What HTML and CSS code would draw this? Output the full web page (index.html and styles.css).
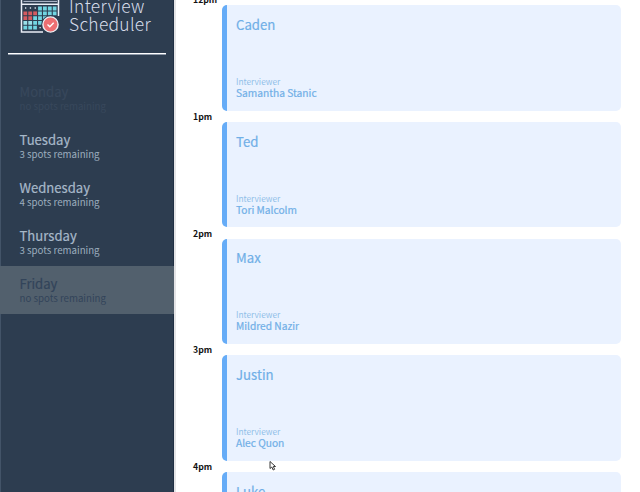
FILE: index.html
```
<!DOCTYPE html>
<html lang="en">
<head>
<meta charset="utf-8">
<title>Interview Scheduler</title>
<link rel="stylesheet" href="styles.css">
</head>
<body>
<main class="layout">
  <aside class="sidebar">
    <header class="brand">
      <svg class="logo" width="40" height="34" viewBox="0 0 40 34">
        <g fill="none" stroke="#e9edf5" stroke-width="1.5">
          <path d="M1.500 0V32H23M38.500 0V16"/>
          <path d="M2 4.300H39" stroke-width="1.400"/>
          <path d="M3.500 1.400H37" stroke-width="1" stroke="#b9c2d4"/>
        </g>
        <g fill="none" stroke-width="3.800" stroke-dasharray="3.800 1.100">
          <path d="M18.100 8.500H36.500M18.100 13.300H36.500M13.200 18.100H30M13.200 22.900H22M3.400 27.700H16.900" stroke="#72d5e2"/>
          <path d="M3.400 22.900H12.100" stroke="#9adfe9"/>
          <path d="M3.400 13.300H12.100M3.400 18.100H12.100" stroke="#d45b60"/>
          <path d="M13.200 13.300H17" stroke="#d45b60"/>
        </g>
        <path d="M5 8H16M19.500 27.700H21" stroke="#dce5ee" stroke-width="1.300" stroke-dasharray="1.300 3.500"/>
        <circle cx="30.500" cy="24.500" r="9.200" fill="#2d3d50"/>
        <circle cx="30.500" cy="24.500" r="7.600" fill="#ed6f72" stroke="#f0eff4" stroke-width="1.400"/>
        <path d="M27.500 24.600L29.800 26.700L33.700 22.700" fill="none" stroke="#fff" stroke-width="1.400"/>
      </svg>
      <h1 class="title">Interview<br>Scheduler</h1>
    </header>
    <hr class="rule">
    <ul class="days">
      <li class="day day-past"><h2>Monday</h2><p>no spots remaining</p></li>
      <li class="day"><h2>Tuesday</h2><p>3 spots remaining</p></li>
      <li class="day"><h2>Wednesday</h2><p>4 spots remaining</p></li>
      <li class="day"><h2>Thursday</h2><p>3 spots remaining</p></li>
      <li class="day day-selected"><h2>Friday</h2><p>no spots remaining</p></li>
    </ul>
  </aside>
  <section class="schedule">
    <article class="slot"><h4>12pm</h4><div class="card"><h2>Caden</h2><div><h5>Interviewer</h5><h3>Samantha Stanic</h3></div></div></article>
    <article class="slot"><h4>1pm</h4><div class="card"><h2>Ted</h2><div><h5>Interviewer</h5><h3>Tori Malcolm</h3></div></div></article>
    <article class="slot"><h4>2pm</h4><div class="card"><h2>Max</h2><div><h5>Interviewer</h5><h3>Mildred Nazir</h3></div></div></article>
    <article class="slot"><h4>3pm</h4><div class="card"><h2>Justin</h2><div><h5>Interviewer</h5><h3>Alec Quon</h3></div></div></article>
    <article class="slot"><h4>4pm</h4><div class="card"><h2>Luke</h2></div></article>
  </section>
</main>
<svg class="cursor" width="8" height="10" viewBox="0 0 8 10"><path d="M1 .5V7.500L2.800 6L4.200 9L5.600 8.300L4.300 5.500H6.500Z" fill="#fff" stroke="#222" stroke-width=".9"/></svg>
</body>
</html>
```
FILE: styles.css
```
* { box-sizing: border-box; margin: 0; padding: 0; }

body {
  height: 492px;
  overflow: hidden;
  background: #fff;
  font-family: "Noto Sans CJK SC", "Noto Sans", sans-serif;
}

h1, h2, h3, h4, h5 { font-weight: 400; white-space: nowrap; }

.layout { display: flex; height: 492px; overflow: hidden; }

.sidebar {
  flex: none;
  width: 174px;
  background: #2d3d50;
  border-left: 1px solid #435468;
  border-right: 1px solid #1f2f43;
}

.brand { display: flex; height: 52.500px; padding-left: 19px; }
.logo { flex: none; }
.title {
  margin: -3px 0 0 9px;
  font-size: 17.400px;
  font-weight: 300;
  line-height: 18px;
  letter-spacing: 0.300px;
  color: #d5dbe8;
}

.rule {
  width: 158px;
  height: 2px;
  margin-left: 7px;
  border: 0;
  background: linear-gradient(#fff 50%, #8e99a8 50%);
}

.days { padding-top: 19.500px; list-style: none; }
.day { height: 48px; margin-left: -1px; margin-right: -1px; padding: 9px 0 0 19.500px; color: #a7b8c9; }
.day h2 { font-size: 13.100px; line-height: 17px; -webkit-text-stroke: 0.200px currentColor; }
.day p { font-size: 9.700px; line-height: 13px; color: #9cadbe; }
.day-past, .day-past p { color: #38485c; }
.day-selected { background: #52606d; }
.day-selected, .day-selected p { color: #32445a; }

.schedule {
  flex: 1;
  padding: 0 19px 0 17px;
  border-left: 2px solid #e4e4e6;
}
.slot { height: 116.750px; }
.slot:first-child { margin-top: -6px; }
.slot h4 { height: 11px; font-size: 8.700px; font-weight: 700; line-height: 11px; color: #111; }
.card {
  display: flex;
  flex-direction: column;
  justify-content: space-between;
  height: 105.500px;
  margin-left: 29px;
  padding: 10.750px 9px 11.750px;
  border-left: 5px solid #66acf7;
  border-radius: 5px;
  background: #eaf2ff;
  color: #70afe7;
}
.card h2 { font-size: 13.200px; line-height: 18px; -webkit-text-stroke: 0.200px currentColor; }
.card h5 { font-size: 8.300px; line-height: 12px; color: #91bfe8; }
.card h3 { font-size: 10.200px; line-height: 12px; -webkit-text-stroke: 0.200px currentColor; }

.cursor { position: absolute; left: 269px; top: 461px; }
```
